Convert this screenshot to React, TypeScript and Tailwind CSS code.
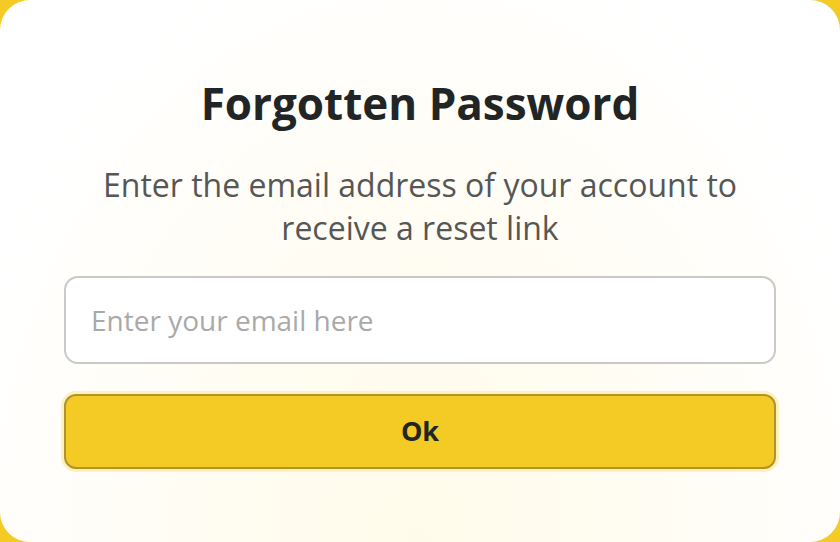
import React from "react";

export default function App() {
  return (
    <div className="h-[542px] w-[840px] bg-[#f4ca24] font-['Open_Sans',sans-serif]">
      <div className="flex h-full w-full flex-col items-center rounded-[30px] bg-white bg-[radial-gradient(ellipse_at_50%_100%,#fffbea_0%,#fffdf6_50%,#ffffff_80%)] px-16 pt-[73px]">
        <h1 className="text-[44px] font-bold leading-[60px] text-[#212526]">Forgotten Password</h1>
        <p className="mt-[30px] text-center text-[32px] leading-[43px] text-[#555757]">
          Enter the email address of your account to
          <br />
          receive a reset link
        </p>
        <input
          type="email"
          placeholder="Enter your email here"
          className="mt-[27px] h-[88px] w-full shrink-0 rounded-[14px] border-2 border-[#c9c9c9] bg-white px-[25px] text-[28px] text-[#333] outline-none placeholder:text-[#a9a9a9]"
        />
        <button className="mt-[30px] h-[75px] w-full shrink-0 rounded-[12px] border-2 border-[#b2932b] bg-[#f4ca24] text-[27px] font-bold text-[#212526] shadow-[0_0_0_3px_#fdf1bd]">
          Ok
        </button>
      </div>
    </div>
  );
}
